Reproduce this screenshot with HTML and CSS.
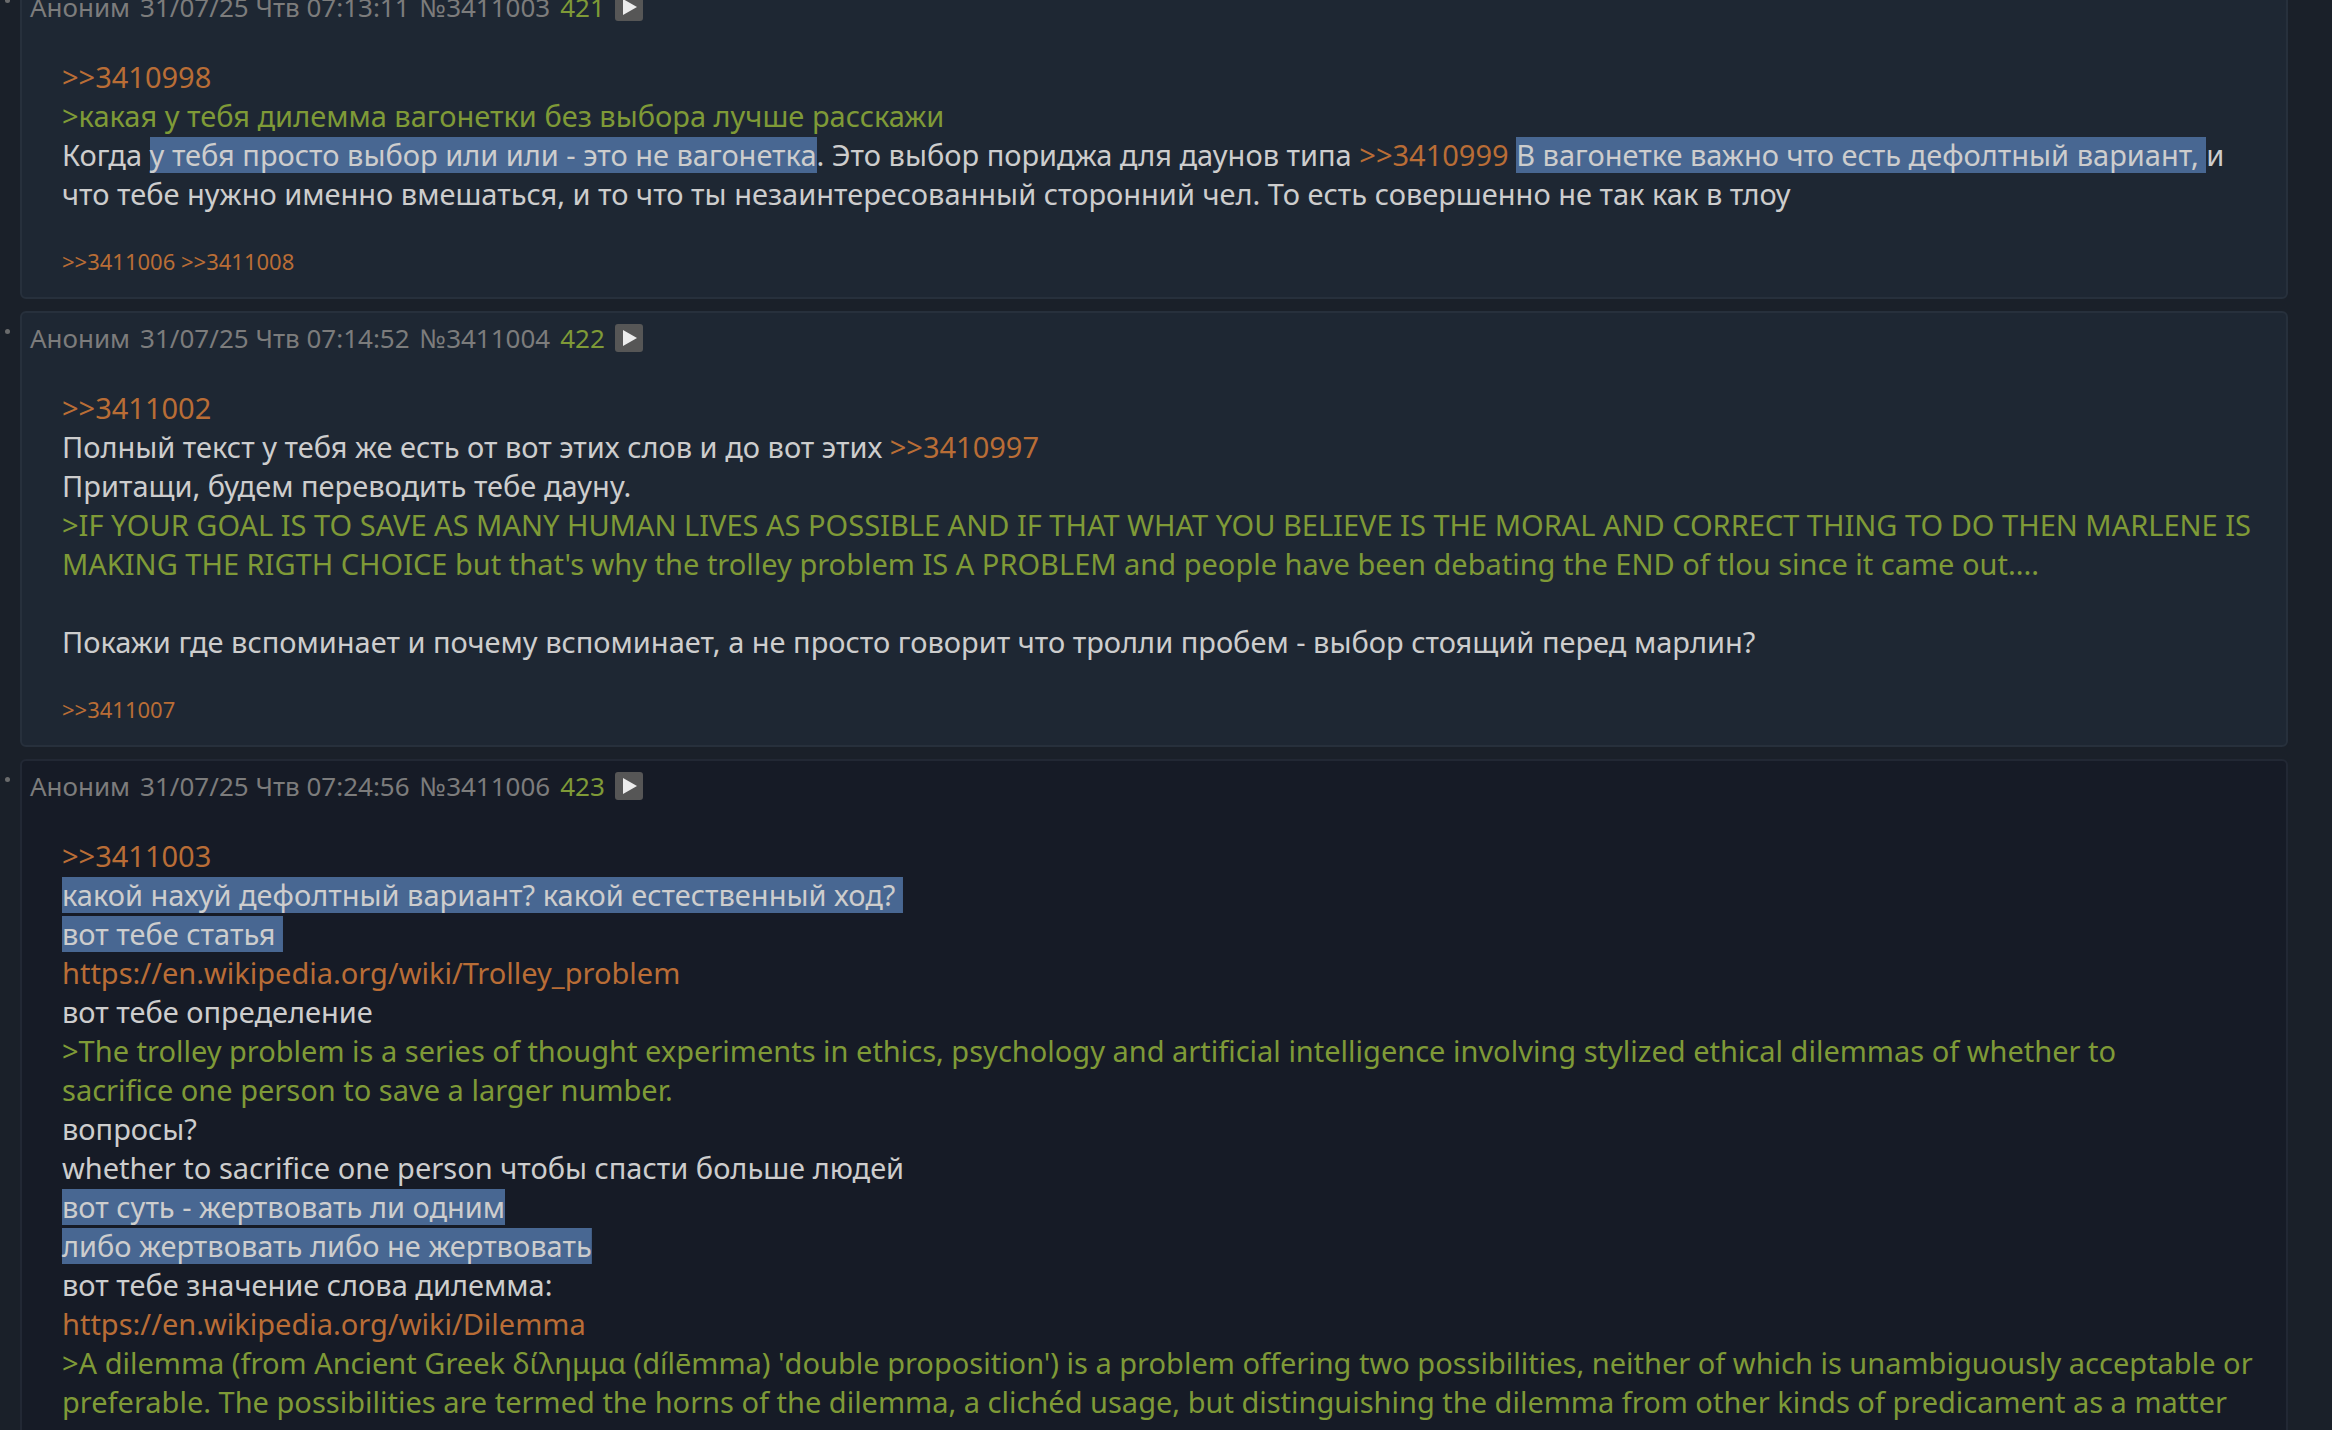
FILE: index.html
```html
<!DOCTYPE html>
<html lang="ru">
<head>
<meta charset="UTF-8">
<meta name="viewport" content="width=device-width, initial-scale=1.0">
<title>Тред</title>
<link rel="stylesheet" href="styles.css">
</head>
<body>
	<main class="thread">

		<div class="post-row">
			<span class="dot"></span>
			<article class="post">
				<header class="post-head">
					<span>Аноним</span>
					<span>31/07/25 Чтв 07:13:11</span>
					<span>№3411003</span>
					<span class="num">421</span>
					<button class="play" aria-label="Меню поста"><svg viewBox="0 0 28 28"><path d="M8 6 L22 14 L8 22 Z"/></svg></button>
				</header>
				<div class="post-body">
					<a href="#3410998">&gt;&gt;3410998</a><br>
					<span class="quote">&gt;какая у тебя дилемма вагонетки без выбора лучше расскажи</span><br>
					Когда <mark>у тебя просто выбор или или - это не вагонетка</mark>. Это выбор пориджа для даунов типа <a href="#3410999">&gt;&gt;3410999</a> <mark>В вагонетке важно что есть дефолтный вариант, </mark>и<br>
					что тебе нужно именно вмешаться, и то что ты незаинтересованный сторонний чел. То есть совершенно не так как в тлоу
				</div>
				<div class="replies"><a href="#3411006">&gt;&gt;3411006</a> <a href="#3411008">&gt;&gt;3411008</a></div>
			</article>
		</div>

		<div class="post-row">
			<span class="dot"></span>
			<article class="post" id="3411004">
				<header class="post-head">
					<span>Аноним</span>
					<span>31/07/25 Чтв 07:14:52</span>
					<span>№3411004</span>
					<span class="num">422</span>
					<button class="play" aria-label="Меню поста"><svg viewBox="0 0 28 28"><path d="M8 6 L22 14 L8 22 Z"/></svg></button>
				</header>
				<div class="post-body">
					<a href="#3411002">&gt;&gt;3411002</a><br>
					Полный текст у тебя же есть от вот этих слов и до вот этих <a href="#3410997">&gt;&gt;3410997</a><br>
					Притащи, будем переводить тебе дауну.<br>
					<span class="quote">&gt;IF YOUR GOAL IS TO SAVE AS MANY HUMAN LIVES AS POSSIBLE AND IF THAT WHAT YOU BELIEVE IS THE MORAL AND CORRECT THING TO DO THEN MARLENE IS<br>
					MAKING THE RIGTH CHOICE but that's why the trolley problem IS A PROBLEM and people have been debating the END of tlou since it came out....</span><br>
					<br>
					Покажи где вспоминает и почему вспоминает, а не просто говорит что тролли пробем - выбор стоящий перед марлин?
				</div>
				<div class="replies"><a href="#3411007">&gt;&gt;3411007</a></div>
			</article>
		</div>

		<div class="post-row">
			<span class="dot"></span>
			<article class="post active" id="3411006">
				<header class="post-head">
					<span>Аноним</span>
					<span>31/07/25 Чтв 07:24:56</span>
					<span>№3411006</span>
					<span class="num">423</span>
					<button class="play" aria-label="Меню поста"><svg viewBox="0 0 28 28"><path d="M8 6 L22 14 L8 22 Z"/></svg></button>
				</header>
				<div class="post-body">
					<a href="#3411003">&gt;&gt;3411003</a><br>
					<mark>какой нахуй дефолтный вариант? какой естественный ход?&nbsp;</mark><br>
					<mark>вот тебе статья&nbsp;</mark><br>
					<a href="https://en.wikipedia.org/wiki/Trolley_problem">https://en.wikipedia.org/wiki/Trolley_problem</a><br>
					вот тебе определение<br>
					<span class="quote">&gt;The trolley problem is a series of thought experiments in ethics, psychology and artificial intelligence involving stylized ethical dilemmas of whether to<br>
					sacrifice one person to save a larger number.</span><br>
					вопросы?<br>
					whether to sacrifice one person чтобы спасти больше людей<br>
					<mark>вот суть - жертвовать ли одним</mark><br>
					<mark>либо жертвовать либо не жертвовать</mark><br>
					вот тебе значение слова дилемма:<br>
					<a href="https://en.wikipedia.org/wiki/Dilemma">https://en.wikipedia.org/wiki/Dilemma</a><br>
					<span class="quote">&gt;A dilemma (from Ancient Greek δίλημμα (dílēmma) 'double proposition') is a problem offering two possibilities, neither of which is unambiguously acceptable or<br>
					preferable. The possibilities are termed the horns of the dilemma, a clichéd usage, but distinguishing the dilemma from other kinds of predicament as a matter<br>
					of</span>
				</div>
			</article>
		</div>

	</main>
</body>
</html>
```
FILE: styles.css
```css
html {
    height: 100%;
}

body {
    margin: 0;
    height: 100%;
    overflow: hidden;
    background-color: #1a2029;
    color: #cdcdcd;
    font-family: "Noto Sans", "Open Sans", sans-serif;
    font-size: 29px;
    line-height: 39px;
}

a {
    color: #b96d36;
    text-decoration: none;
}

a:hover {
    color: #de8a4e;
}

/* the thread is scrolled a little past the first header */
.thread {
    display: flex;
    flex-direction: column;
    gap: 12px;
    margin-top: -20px;
    padding-right: 44px;
}

.post-row {
    display: flex;
    align-items: flex-start;
}

.dot {
    flex: none;
    width: 5px;
    height: 5px;
    margin: 18px 10px 0 5px;
    border-radius: 50%;
    background-color: #6a6b6c;
}

.post {
    flex: 1;
    min-width: 0;
    padding: 7px 8px 17px;
    border: 2px solid #27303c;
    border-radius: 6px;
    background-color: #1e2733;
}

.post.active {
    background-color: #161b26;
    border-color: #222834;
}

.post-head {
    display: flex;
    align-items: center;
    gap: 10px;
    height: 36px;
    font-size: 26px;
    color: #7c7c7c;
}

.num {
    color: #7f9a37;
}

.play {
    width: 28px;
    height: 28px;
    padding: 0;
    border: none;
    border-radius: 3px;
    background-color: #565656;
    cursor: pointer;
}

.play svg {
    display: block;
    width: 28px;
    height: 28px;
    fill: #ececec;
}

.post-body {
    margin: 32px 0 0 32px;
    white-space: nowrap;
}

.quote {
    color: #7f9a37;
}

/* fixed height bar, so a thin gap stays between selected lines */
mark {
    background: linear-gradient(#486792, #486792) center / 100% 36px no-repeat;
    color: inherit;
}

.replies {
    margin: 30px 0 0 32px;
    padding-bottom: 1px;
    font-size: 22px;
    line-height: 36px;
}
```
